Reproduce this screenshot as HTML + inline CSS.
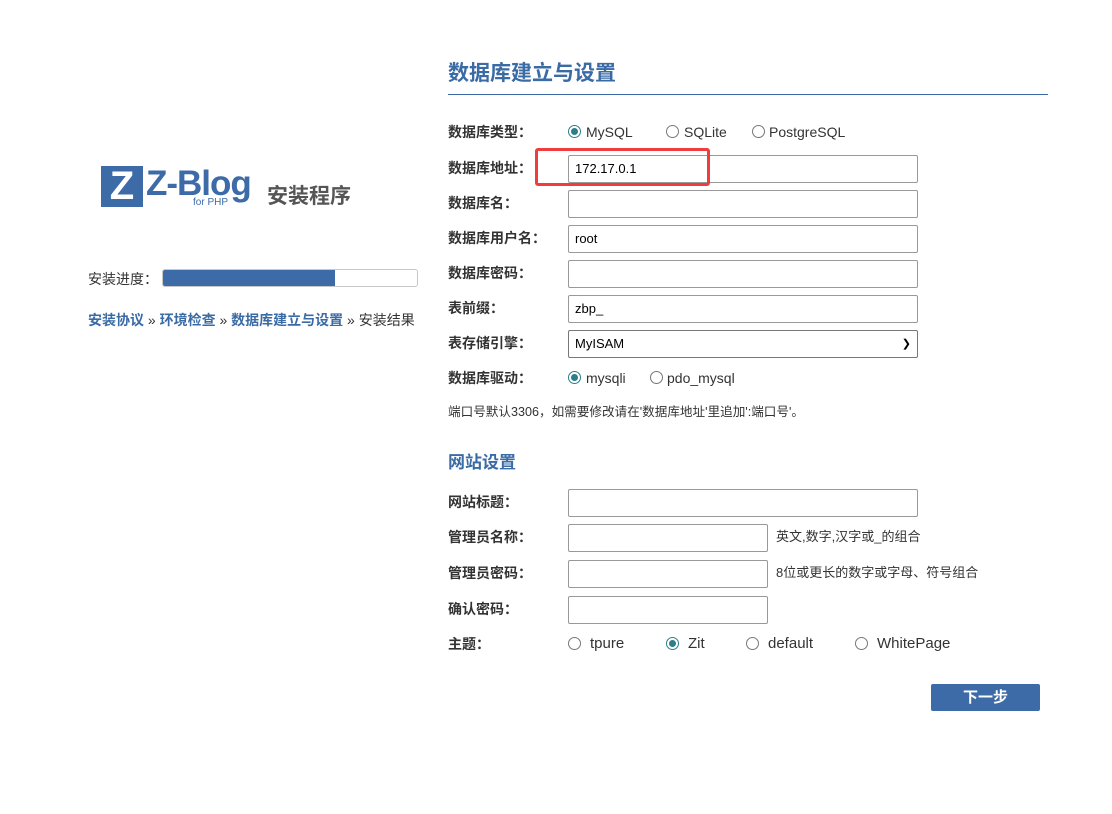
<!DOCTYPE html>
<html><head><meta charset="utf-8"><style>
*{margin:0;padding:0;box-sizing:border-box}
body{width:1112px;height:814px;background:#fff;position:relative;font-family:"Liberation Sans","Noto Sans CJK SC",sans-serif;color:#333;overflow:hidden}
.a{position:absolute;white-space:nowrap}
.lb{font-size:14px;font-weight:bold;color:#333;line-height:16px}
.in{position:absolute;height:28px;border:1px solid #999;border-radius:2px;background:#fff;font-size:13px;line-height:26px;padding-left:6px;color:#000}
.r{position:absolute;width:13px;height:13px;border:1px solid #777;border-radius:50%;background:#fff}
.r.c{border-color:#2a7f8a}
.r.c::after{content:"";position:absolute;left:2px;top:2px;width:7px;height:7px;border-radius:50%;background:#2a7f8a}
.rt{font-size:14px;line-height:18px;color:#333}
.rt2{font-size:15px;line-height:18px;color:#333}
.blue{color:#3a6ba5}
</style></head><body>
<div class="a" style="left:101px;top:166px;width:42px;height:41px;background:#3d6ba8;color:#fff;font:bold 40px/41px 'Liberation Sans',sans-serif;text-align:center">Z</div>
<div class="a" style="left:146px;top:162px;font:bold 35px/44px 'Liberation Sans',sans-serif;color:#3d6ba8;letter-spacing:-1px">Z-Blog</div>
<div class="a" style="left:192px;top:197px;font:10px/12px 'Liberation Sans',sans-serif;color:#3d6ba8;background:#fff;padding:0 1px">for PHP</div>
<div class="a" style="left:267px;top:183px;font-size:21px;font-weight:bold;color:#555;line-height:28px">安装程序</div>
<div class="a" style="left:88px;top:271px;font-size:14px;line-height:16px;color:#333">安装进度：</div>
<div class="a" style="left:162px;top:269px;width:256px;height:18px;border:1px solid #c8c8c8;border-radius:3px;background:#fff"><div style="width:172px;height:16px;background:#3d6ba8;border-radius:2px 0 0 2px"></div></div>
<div class="a" style="left:88px;top:312px;font-size:14px;line-height:16px"><b class="blue">安装协议</b> » <b class="blue">环境检查</b> » <b class="blue">数据库建立与设置</b> » 安装结果</div>

<div class="a blue" style="left:448px;top:60px;font-size:21px;font-weight:bold;line-height:28px">数据库建立与设置</div>
<div class="a" style="left:448px;top:94px;width:600px;height:1px;background:#3d6ba8"></div>

<div class="a lb" style="left:448px;top:124px">数据库类型：</div>
<div class="r c" style="left:568px;top:125px"></div><div class="a rt" style="left:586px;top:123px">MySQL</div>
<div class="r" style="left:666px;top:125px"></div><div class="a rt" style="left:684px;top:123px">SQLite</div>
<div class="r" style="left:752px;top:125px"></div><div class="a rt" style="left:769px;top:123px">PostgreSQL</div>

<div class="a lb" style="left:448px;top:160px">数据库地址：</div>
<div class="in" style="left:568px;top:155px;width:350px">172.17.0.1</div>
<div class="a" style="left:535px;top:148px;width:175px;height:38px;border:3px solid #f03c3c;border-radius:3px"></div>

<div class="a lb" style="left:448px;top:195px">数据库名：</div>
<div class="in" style="left:568px;top:190px;width:350px"></div>
<div class="a lb" style="left:448px;top:230px">数据库用户名：</div>
<div class="in" style="left:568px;top:225px;width:350px">root</div>
<div class="a lb" style="left:448px;top:265px">数据库密码：</div>
<div class="in" style="left:568px;top:260px;width:350px"></div>
<div class="a lb" style="left:448px;top:300px">表前缀：</div>
<div class="in" style="left:568px;top:295px;width:350px">zbp_</div>
<div class="a lb" style="left:448px;top:335px">表存储引擎：</div>
<div class="in" style="left:568px;top:330px;width:350px;border-color:#777">MyISAM<span style="position:absolute;right:6px;top:0;font-size:11px">&#10095;</span></div>

<div class="a lb" style="left:448px;top:370px">数据库驱动：</div>
<div class="r c" style="left:568px;top:371px"></div><div class="a rt" style="left:586px;top:369px">mysqli</div>
<div class="r" style="left:650px;top:371px"></div><div class="a rt" style="left:667px;top:369px">pdo_mysql</div>

<div class="a" style="left:448px;top:404px;font-size:12.6px;line-height:16px">端口号默认3306，如需要修改请在'数据库地址'里追加':端口号'。</div>

<div class="a blue" style="left:448px;top:452px;font-size:17px;font-weight:bold;line-height:22px">网站设置</div>

<div class="a lb" style="left:448px;top:494px">网站标题：</div>
<div class="in" style="left:568px;top:489px;width:350px"></div>
<div class="a lb" style="left:448px;top:529px">管理员名称：</div>
<div class="in" style="left:568px;top:524px;width:200px"></div>
<div class="a" style="left:776px;top:529px;font-size:13px;line-height:16px">英文,数字,汉字或_的组合</div>
<div class="a lb" style="left:448px;top:565px">管理员密码：</div>
<div class="in" style="left:568px;top:560px;width:200px"></div>
<div class="a" style="left:776px;top:565px;font-size:13px;line-height:16px">8位或更长的数字或字母、符号组合</div>
<div class="a lb" style="left:448px;top:601px">确认密码：</div>
<div class="in" style="left:568px;top:596px;width:200px"></div>

<div class="a lb" style="left:448px;top:636px">主题：</div>
<div class="r" style="left:568px;top:637px"></div><div class="a rt2" style="left:590px;top:635px">tpure</div>
<div class="r c" style="left:666px;top:637px"></div><div class="a rt2" style="left:688px;top:635px">Zit</div>
<div class="r" style="left:746px;top:637px"></div><div class="a rt2" style="left:768px;top:635px">default</div>
<div class="r" style="left:855px;top:637px"></div><div class="a rt2" style="left:877px;top:635px">WhitePage</div>

<div class="a" style="left:931px;top:684px;width:109px;height:27px;background:#3d6ba8;border-radius:2px;color:#fff;font-size:15px;font-weight:bold;line-height:27px;text-align:center">下一步</div>
</body></html>
